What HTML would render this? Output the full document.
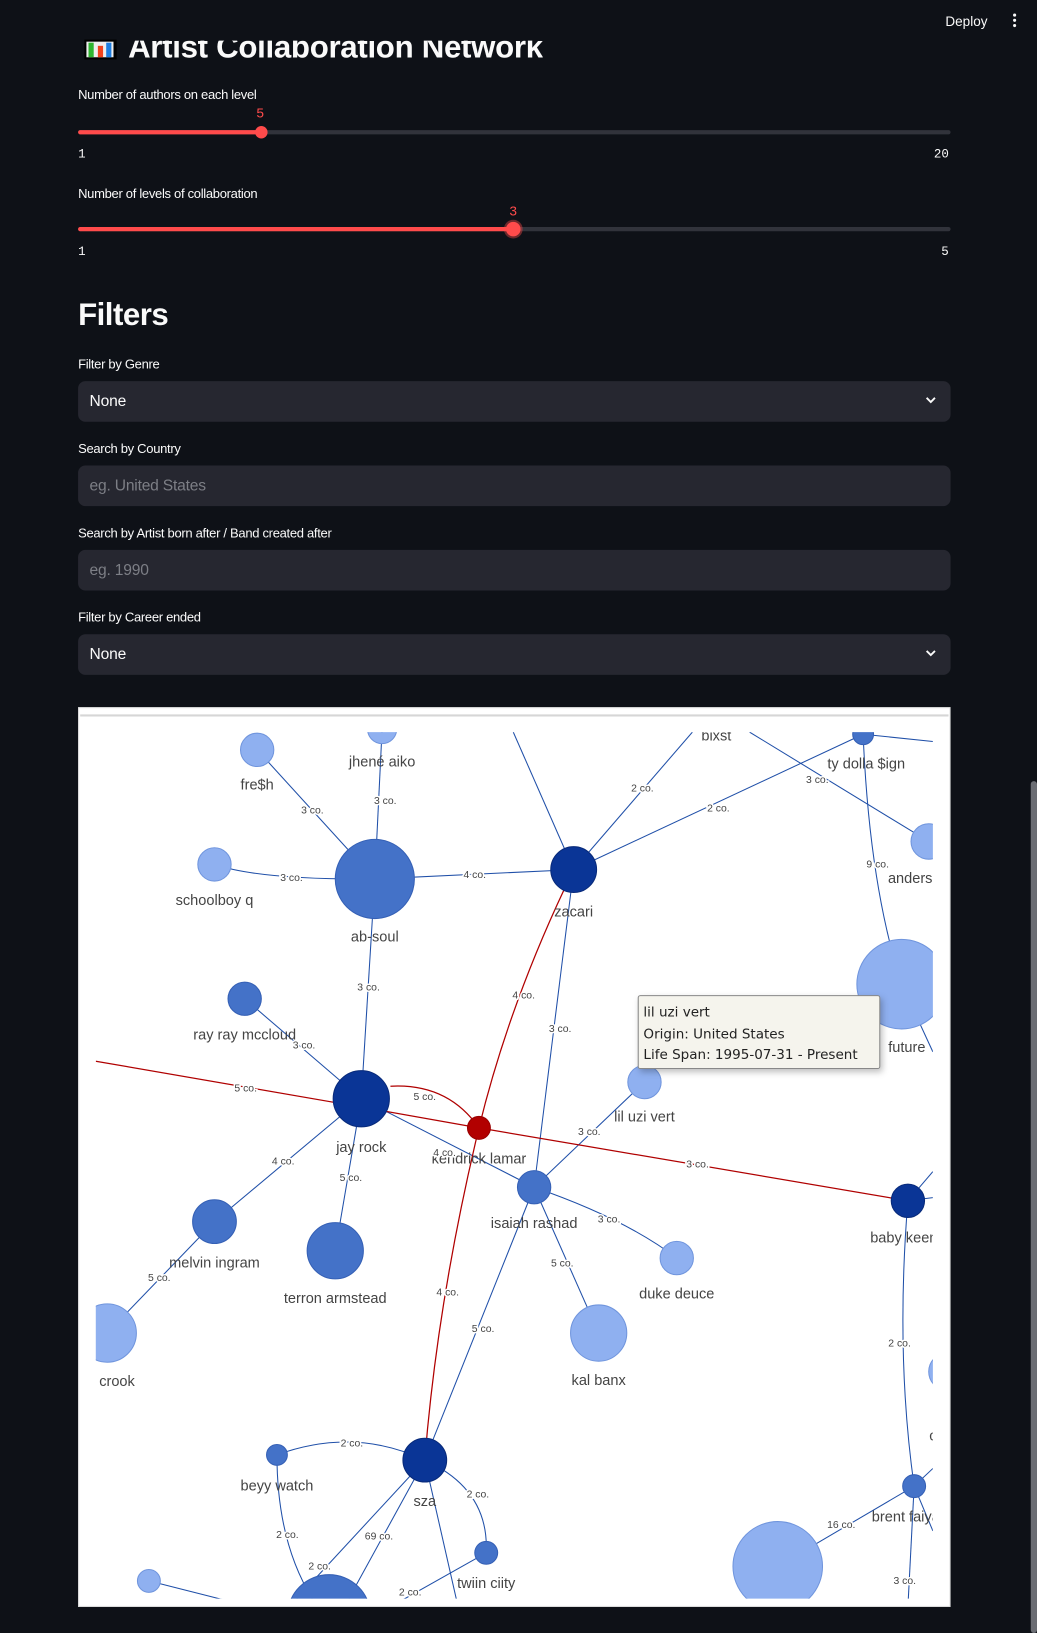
<!DOCTYPE html>
<html><head><meta charset="utf-8">
<style>
html,body{margin:0;padding:0;background:#0e1117;overflow:hidden;width:1037px;height:1633px}
#w{position:absolute;left:0;top:0;width:996px;height:1568px;transform:scale(1.04116,1.04145);transform-origin:0 0;font-family:"Liberation Sans",sans-serif;color:#fafafa}
.a{position:absolute}
.lbl{font-size:12.5px;color:#fafafa;letter-spacing:-0.3px}
.track{position:absolute;height:4px;border-radius:2px;background:#31333b}
.fill{position:absolute;height:4px;border-radius:2px;background:#ff4b4b}
.th{position:absolute;width:12px;height:12px;border-radius:50%;background:#ff4b4b}
.tick{position:absolute;font-family:"Liberation Mono",monospace;font-size:12px;color:#fafafa}
.box{position:absolute;left:75px;width:838px;height:39px;background:#262730;border-radius:7px}
.box span{position:absolute;left:11px;top:11px;font-size:15px;letter-spacing:-0.2px}
.ph{color:#7d7f86}
</style></head><body>
<div id="w">
<div class="a" style="left:908px;top:13px;font-size:13px;color:#fafafa">Deploy</div>
<div class="a" style="left:973px;top:13px;width:3px">
 <div style="width:3px;height:3px;border-radius:50%;background:#fafafa;margin-bottom:2px"></div>
 <div style="width:3px;height:3px;border-radius:50%;background:#fafafa;margin-bottom:2px"></div>
 <div style="width:3px;height:3px;border-radius:50%;background:#fafafa"></div></div>
<div class="a" style="left:81px;top:38px;width:31px;height:19px;background:#000"></div>
<div class="a" style="left:83px;top:40px;width:26px;height:15px;background:#eee"></div>
<div class="a" style="left:85px;top:41px;width:5px;height:14px;background:#2fb52f"></div>
<div class="a" style="left:94px;top:44px;width:5px;height:11px;background:#f0421c"></div>
<div class="a" style="left:102px;top:41px;width:5px;height:14px;background:#1e7ee0"></div>
<div class="a" style="left:123px;top:28px;font-size:30px;font-weight:bold;line-height:36px;letter-spacing:-0.3px;clip-path:inset(11px 0 0 0)">Artist Collaboration Network</div>

<div class="a lbl" style="left:75px;top:84px">Number of authors on each level</div>
<div class="a" style="left:246px;top:102px;font-size:13px;color:#ff4b4b;font-family:'Liberation Mono',monospace">5</div>
<div class="track" style="left:75px;top:125px;width:838px"></div>
<div class="fill" style="left:75px;top:125px;width:176px"></div>
<div class="th" style="left:245px;top:121px"></div>
<div class="tick" style="left:75px;top:141px">1</div>
<div class="tick" style="left:897px;top:141px">20</div>

<div class="a lbl" style="left:75px;top:179px">Number of levels of collaboration</div>
<div class="a" style="left:489px;top:196px;font-size:13px;color:#ff4b4b;font-family:'Liberation Mono',monospace">3</div>
<div class="track" style="left:75px;top:218px;width:838px"></div>
<div class="fill" style="left:75px;top:218px;width:419px"></div>
<div class="th" style="left:486px;top:213px;width:14px;height:14px;box-shadow:0 0 0 2px rgba(255,75,75,.4)"></div>
<div class="tick" style="left:75px;top:235px">1</div>
<div class="tick" style="left:904px;top:235px">5</div>

<div class="a" style="left:75px;top:286px;font-size:30px;font-weight:bold;letter-spacing:-0.5px">Filters</div>
<div class="a lbl" style="left:75px;top:343px">Filter by Genre</div>
<div class="box" style="top:366px"><span>None</span><svg style="position:absolute;right:14px;top:14px" width="10" height="8"><path d="M1 2 L5 6 L9 2" stroke="#fafafa" stroke-width="1.8" fill="none"/></svg></div>
<div class="a lbl" style="left:75px;top:424px">Search by Country</div>
<div class="box" style="top:447px"><span class="ph">eg. United States</span></div>
<div class="a lbl" style="left:75px;top:505px">Search by Artist born after / Band created after</div>
<div class="box" style="top:528px"><span class="ph">eg. 1990</span></div>
<div class="a lbl" style="left:75px;top:586px">Filter by Career ended</div>
<div class="box" style="top:609px"><span>None</span><svg style="position:absolute;right:14px;top:14px" width="10" height="8"><path d="M1 2 L5 6 L9 2" stroke="#fafafa" stroke-width="1.8" fill="none"/></svg></div>

<div class="a" style="left:990px;top:750px;width:6px;height:818px;background:#6b6d73;border-radius:3px"></div>

<svg class="a" style="left:75px;top:679px" width="838" height="864" viewBox="75 679 838 864">
<rect x="75" y="679" width="838" height="864" fill="#fff"/>
<rect x="75" y="679" width="838" height="864" fill="none" stroke="#ddd" stroke-width="2"/>
<line x1="77" y1="687" x2="911" y2="687" stroke="#d6d6d6" stroke-width="2"/>
<defs><clipPath id="c"><rect x="92" y="703" width="804" height="832"/></clipPath></defs>
<g clip-path="url(#c)" font-family="Liberation Sans,Arial,sans-serif">
<g stroke="#1f4fa8" stroke-width="1" fill="none">
<line x1="247" y1="720" x2="360" y2="844"/>
<line x1="367" y1="700" x2="360" y2="844"/>
<path d="M206 830 Q250 845 360 844"/>
<line x1="360" y1="844" x2="551" y2="835"/>
<line x1="360" y1="844" x2="347" y2="1055"/>
<line x1="493" y1="703" x2="551" y2="835"/>
<line x1="665" y1="703" x2="551" y2="835"/>
<line x1="829" y1="705" x2="551" y2="835"/>
<line x1="551" y1="835" x2="513" y2="1140"/>
<line x1="720" y1="703" x2="892" y2="808"/>
<path d="M829 705 Q835 850 866 945"/>
<line x1="829" y1="705" x2="896" y2="712"/>
<line x1="866" y1="945" x2="896" y2="1010"/>
<line x1="235" y1="959" x2="347" y2="1055"/>
<line x1="347" y1="1055" x2="206" y2="1173"/>
<line x1="347" y1="1055" x2="322" y2="1201"/>
<line x1="347" y1="1055" x2="513" y2="1140"/>
<line x1="206" y1="1173" x2="103" y2="1280"/>
<line x1="513" y1="1140" x2="619" y2="1039"/>
<path d="M513 1140 Q600 1170 650 1208"/>
<line x1="513" y1="1140" x2="575" y2="1280"/>
<line x1="513" y1="1140" x2="408" y2="1402"/>
<path d="M266 1397 Q340 1370 408 1402"/>
<path d="M408 1402 Q470 1430 467 1491"/>
<line x1="408" y1="1402" x2="285" y2="1535"/>
<line x1="408" y1="1402" x2="335" y2="1535"/>
<line x1="408" y1="1402" x2="440" y2="1543"/>
<path d="M266 1397 Q266 1480 300 1535"/>
<line x1="467" y1="1491" x2="380" y2="1540"/>
<line x1="143" y1="1518" x2="230" y2="1540"/>
<path d="M872 1153 Q860 1300 878 1427"/>
<line x1="878" y1="1427" x2="747" y2="1504"/>
<line x1="878" y1="1427" x2="896" y2="1410"/>
<line x1="878" y1="1427" x2="872" y2="1543"/>
<line x1="878" y1="1427" x2="896" y2="1470"/>
<line x1="872" y1="1153" x2="896" y2="1125"/>
<line x1="872" y1="1153" x2="896" y2="1150"/>
</g>
<g stroke="#b00000" stroke-width="1.2" fill="none">
<polyline points="92,1019 347,1063 460,1083 872,1153"/>
<path d="M551 835 Q490 960 460 1083"/>
<path d="M460 1083 Q420 1250 408 1402"/>
<path d="M375 1043 Q430 1040 460 1083"/>
</g>
<g stroke-width="1">
<circle cx="247" cy="720" r="16" fill="#8fb0f0" stroke="#7095dd"/>
<circle cx="367" cy="700" r="14" fill="#8fb0f0" stroke="#7095dd"/>
<circle cx="206" cy="830" r="16" fill="#8fb0f0" stroke="#7095dd"/>
<circle cx="360" cy="844" r="38" fill="#4472c8" stroke="#3560b5"/>
<circle cx="551" cy="835" r="22" fill="#0a3596" stroke="#082a7a"/>
<circle cx="829" cy="705" r="10" fill="#4472c8" stroke="#3560b5"/>
<circle cx="892" cy="808" r="17" fill="#8fb0f0" stroke="#7095dd"/>
<circle cx="866" cy="945" r="43" fill="#8fb0f0" stroke="#7095dd"/>
<circle cx="235" cy="959" r="16" fill="#4472c8" stroke="#3560b5"/>
<circle cx="347" cy="1055" r="27" fill="#0a3596" stroke="#082a7a"/>
<circle cx="460" cy="1083" r="11" fill="#b20000" stroke="#900"/>
<circle cx="619" cy="1039" r="16" fill="#8fb0f0" stroke="#7095dd"/>
<circle cx="513" cy="1140" r="16" fill="#4472c8" stroke="#3560b5"/>
<circle cx="872" cy="1153" r="16" fill="#0a3596" stroke="#082a7a"/>
<circle cx="206" cy="1173" r="21" fill="#4472c8" stroke="#3560b5"/>
<circle cx="322" cy="1201" r="27" fill="#4472c8" stroke="#3560b5"/>
<circle cx="650" cy="1208" r="16" fill="#8fb0f0" stroke="#7095dd"/>
<circle cx="575" cy="1280" r="27" fill="#8fb0f0" stroke="#7095dd"/>
<circle cx="103" cy="1280" r="28" fill="#8fb0f0" stroke="#7095dd"/>
<circle cx="266" cy="1397" r="10" fill="#4472c8" stroke="#3560b5"/>
<circle cx="408" cy="1402" r="21" fill="#0a3596" stroke="#082a7a"/>
<circle cx="467" cy="1491" r="11" fill="#4472c8" stroke="#3560b5"/>
<circle cx="878" cy="1427" r="11" fill="#4472c8" stroke="#3560b5"/>
<circle cx="747" cy="1504" r="43" fill="#8fb0f0" stroke="#7095dd"/>
<circle cx="143" cy="1518" r="11" fill="#8fb0f0" stroke="#7095dd"/>
<circle cx="316" cy="1552" r="40" fill="#4472c8" stroke="#3560b5"/>
<circle cx="910" cy="1317" r="18" fill="#8fb0f0" stroke="#7095dd"/>
</g>
<g font-size="14" fill="#444" text-anchor="middle">
<text x="247" y="758">fre$h</text><text x="367" y="736">jhené aiko</text>
<text x="206" y="869">schoolboy q</text><text x="360" y="904">ab-soul</text>
<text x="551" y="880">zacari</text><text x="832" y="738">ty dolla $ign</text>
<text x="688" y="711">bixst</text>
<text x="882" y="848">anderson</text><text x="871" y="1010">future</text>
<text x="235" y="998">ray ray mccloud</text><text x="347" y="1106">jay rock</text>
<text x="460" y="1117">kendrick lamar</text><text x="619" y="1077">lil uzi vert</text>
<text x="513" y="1179">isaiah rashad</text><text x="870" y="1193">baby keem</text>
<text x="206" y="1217">melvin ingram</text><text x="322" y="1251">terron armstead</text>
<text x="650" y="1247">duke deuce</text><text x="575" y="1330">kal banx</text>
<text x="105" y="1331">ty crook</text><text x="266" y="1431">beyy watch</text>
<text x="408" y="1446">sza</text><text x="467" y="1525">twiin ciity</text>
<text x="870" y="1461">brent faiya</text><text x="896" y="1383">c</text>
</g>
<g font-size="10" fill="#444" text-anchor="middle" stroke="#fff" stroke-width="3" paint-order="stroke">
<text x="300" y="781">3 co.</text><text x="370" y="772">3 co.</text>
<text x="280" y="846">3 co.</text><text x="456" y="843">4 co.</text>
<text x="617" y="760">2 co.</text><text x="690" y="779">2 co.</text>
<text x="785" y="752">3 co.</text><text x="843" y="833">9 co.</text>
<text x="354" y="951">3 co.</text><text x="503" y="959">4 co.</text>
<text x="538" y="991">3 co.</text><text x="292" y="1007">3 co.</text>
<text x="236" y="1048">5 co.</text><text x="408" y="1056">5 co.</text>
<text x="566" y="1090">3 co.</text><text x="427" y="1110">4 co.</text>
<text x="670" y="1121">3 co.</text><text x="272" y="1118">4 co.</text>
<text x="337" y="1134">5 co.</text><text x="585" y="1174">3 co.</text>
<text x="540" y="1216">5 co.</text><text x="153" y="1230">5 co.</text>
<text x="430" y="1244">4 co.</text><text x="464" y="1279">5 co.</text>
<text x="864" y="1293">2 co.</text><text x="338" y="1389">2 co.</text>
<text x="459" y="1438">2 co.</text><text x="276" y="1477">2 co.</text>
<text x="364" y="1478">69 co.</text><text x="307" y="1507">2 co.</text>
<text x="394" y="1532">2 co.</text><text x="808" y="1467">16 co.</text>
<text x="869" y="1521">3 co.</text>
</g>
</g>
<rect x="613" y="956" width="232" height="70" rx="2" fill="#f5f4ed" stroke="#888" stroke-width="1" style="filter:drop-shadow(2px 3px 3px rgba(0,0,0,.25))"/>
<g font-family="DejaVu Sans,sans-serif" font-size="13" fill="#222">
<text x="618" y="976">lil uzi vert</text>
<text x="618" y="997">Origin: United States</text>
<text x="618" y="1017">Life Span: 1995-07-31 - Present</text>
</g>
</svg>
</div>
</body></html>
